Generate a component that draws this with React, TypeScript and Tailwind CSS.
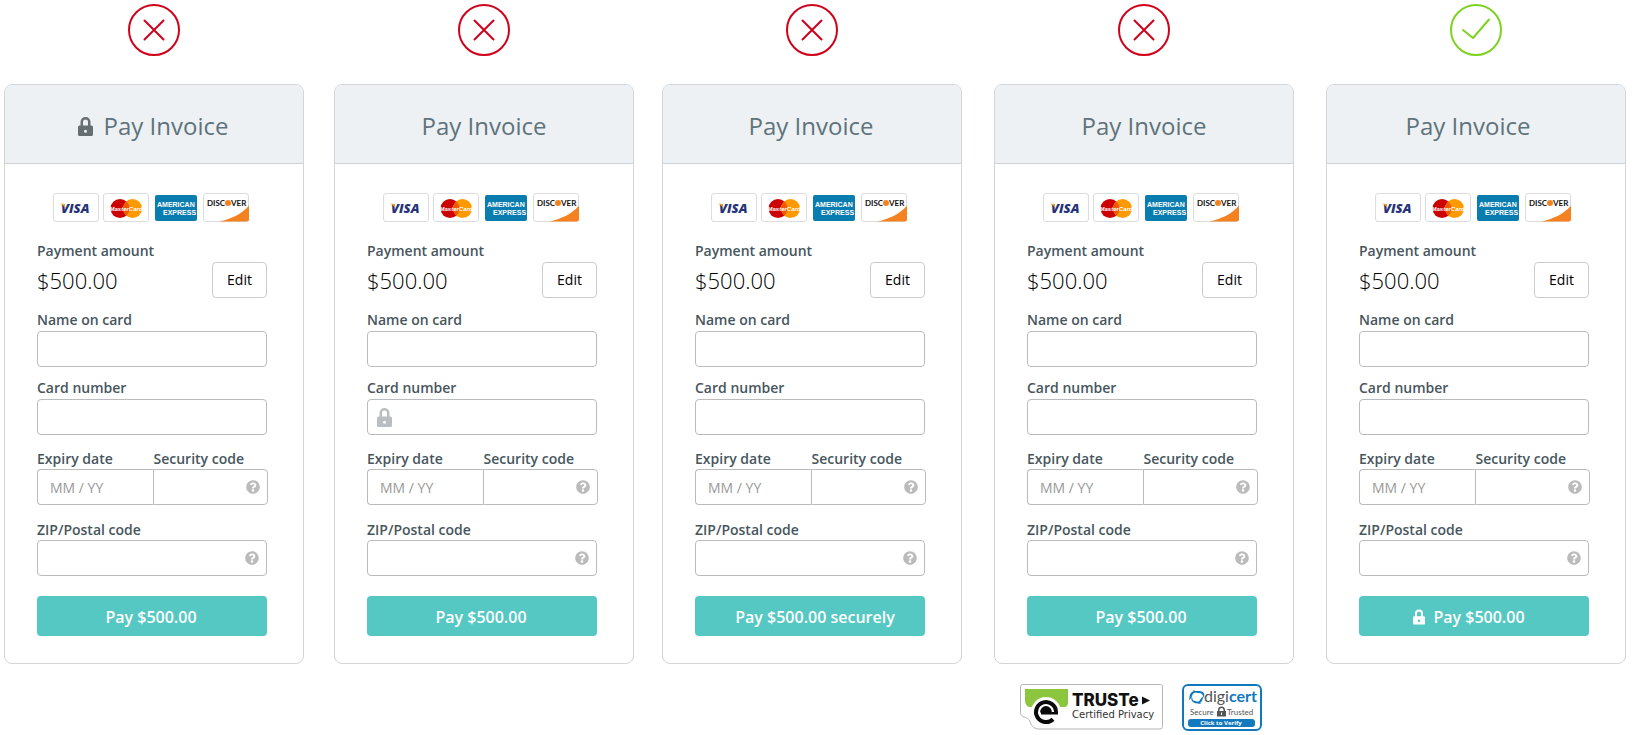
import { ReactNode, useId } from "react";
import { FaQuestionCircle } from "react-icons/fa";

type LockPlace = "title" | "cardNumber" | "button" | "none";

interface IVariant {
  id: string;
  good: boolean;
  lock: LockPlace;
  payLabel: string;
  spacing: string;
  titleClass: string;
  payClass: string;
  seals?: boolean;
}

const variants: IVariant[] = [
  {
    id: "lock-title",
    good: false,
    lock: "title",
    payLabel: "Pay $500.00",
    spacing: "",
    titleClass: "pr-0.5",
    payClass: "pr-0.5",
  },
  {
    id: "lock-field",
    good: false,
    lock: "cardNumber",
    payLabel: "Pay $500.00",
    spacing: "ml-[30px]",
    titleClass: "",
    payClass: "pr-0.5",
  },
  {
    id: "securely",
    good: false,
    lock: "none",
    payLabel: "Pay $500.00 securely",
    spacing: "ml-7",
    titleClass: "pr-0.5",
    payClass: "pl-2.5",
  },
  {
    id: "seals",
    good: false,
    lock: "none",
    payLabel: "Pay $500.00",
    spacing: "ml-8",
    titleClass: "",
    payClass: "pr-0.5",
    seals: true,
  },
  {
    id: "lock-button",
    good: true,
    lock: "button",
    payLabel: "Pay $500.00",
    spacing: "ml-8",
    titleClass: "pr-4",
    payClass: "pr-2.5",
  },
];

const LockIcon = ({ className }: { className: string }) => (
  <svg viewBox="0 0 15 19" className={className} aria-hidden="true">
    <path
      fill="currentColor"
      fillRule="evenodd"
      d="M2.500 8.500V5a5 5 0 0 1 10 0v3.500h1A1.500 1.500 0 0 1 15 10v7.500a1.500 1.500 0 0 1-1.500 1.500h-12A1.500 1.500 0 0 1 0 17.500V10a1.500 1.500 0 0 1 1.500-1.500zM5 8.500h5V5a2.500 2.500 0 0 0-5 0zM7.500 12.700a1.500 1.500 0 1 0 0 3 1.500 1.500 0 0 0 0-3z"
    />
  </svg>
);

const StatusIcon = ({ good }: { good: boolean }) => (
  <svg
    viewBox="0 0 52 52"
    className={"size-13 mx-auto " + (good ? "text-[#7ed321]" : "text-[#d0021b]")}
    fill="none"
    stroke="currentColor"
    strokeWidth="2"
    strokeLinecap="round"
    strokeLinejoin="round"
    role="img"
    aria-label={good ? "Recommended" : "Not recommended"}
  >
    <circle cx="26" cy="26" r="25" />
    {good ? (
      <path d="M13 26l10 8 16-18.500" />
    ) : (
      <path d="M16.500 16.500l19 19M35.500 16.500l-19 19" />
    )}
  </svg>
);

const CardLogos = () => (
  <div className="flex gap-1 ml-4">
    <svg width="46" height="29" viewBox="0 0 46 29" role="img" aria-label="Visa">
      <rect x="0.5" y="0.5" width="45" height="28" rx="2.500" fill="#fff" stroke="#dcdcdc" />
      <text x="8" y="20" fontSize="13" fontWeight="800" fontStyle="italic" fill="#26337a" fontFamily="Open Sans, sans-serif">
        VISA
      </text>
      <path d="M7 10.700h4.200l1.800 5.500c-1-2.500-3-4.500-6-5.500z" fill="#f7a823" />
    </svg>
    <svg width="46" height="29" viewBox="0 0 46 29" role="img" aria-label="MasterCard">
      <rect x="0.5" y="0.5" width="45" height="28" rx="2.500" fill="#fff" stroke="#dcdcdc" />
      <circle cx="17" cy="15.500" r="9.500" fill="#c00" />
      <circle cx="29.500" cy="15.500" r="9.500" fill="#f90" />
      <path d="M23.250 8.400a9.500 9.500 0 0 1 0 14.200 9.500 9.500 0 0 1 0-14.200z" fill="#ee5a00" />
      <text x="23" y="18" textAnchor="middle" fontSize="6" fontWeight="700" fontStyle="italic" fill="#fff" fontFamily="Liberation Sans, sans-serif">
        MasterCard
      </text>
    </svg>
    <svg width="46" height="29" viewBox="0 0 46 29" role="img" aria-label="American Express">
      <rect x="2" y="2" width="42" height="26" rx="2" fill="#0a7db0" />
      <g fill="#fff" fontWeight="700" fontSize="7" fontFamily="Liberation Sans, sans-serif">
        <text x="4" y="14">AMERICAN</text>
        <text x="10" y="22">EXPRESS</text>
      </g>
    </svg>
    <svg width="46" height="29" viewBox="0 0 46 29" role="img" aria-label="Discover">
      <rect x="0.5" y="0.5" width="45" height="28" rx="2.500" fill="#fff" stroke="#dcdcdc" />
      <path d="M16 28.500C29 26 40 20 46 12.500V26a2.500 2.500 0 0 1-2.500 2.500z" fill="#f58220" />
      <g fill="#111" fontWeight="700" fontSize="8" fontFamily="Lato, sans-serif">
        <text x="4" y="13">DISC</text>
        <text x="28" y="13">VER</text>
      </g>
      <circle cx="25" cy="10" r="3" fill="#f58220" />
    </svg>
  </div>
);

const TrusteSeal = () => (
  <svg width="143" height="46" viewBox="0 0 143 46" role="img" aria-label="TRUSTe Certified Privacy">
    <path
      d="M2.500.5h138a2 2 0 0 1 2 2v40a2.500 2.500 0 0 1-2.500 2.500H19c-4 0-7-2-8.500-6-1-3-2-4.500-5-5.500C2 32.500.5 31 .5 28.500v-26a2 2 0 0 1 2-2z"
      fill="#fff"
      stroke="#b5b5b5"
    />
    <path d="M5 5h43v13c0 3-1 5-4 5H9c-3-1-4-4-4-7z" fill="#8cc63f" />
    <circle cx="26" cy="28" r="15" fill="#fff" />
    <path d="M36 28a10 10 0 1 0-3 7.200" fill="none" stroke="#0a0a0a" strokeWidth="4" />
    <path d="M20 28.500a6 6.500 0 0 1 12 0z" fill="#0a0a0a" />
    <path d="M21 28h17v2.500H21z" fill="#0a0a0a" />
    <text x="52" y="22" fontSize="17" fontWeight="800" fill="#111" fontFamily="Inter, sans-serif">
      TRUSTe
    </text>
    <path d="M122 12.500l8 4-8 4z" fill="#111" />
    <text x="52" y="34" fontSize="10" fill="#333" fontFamily="DejaVu Sans, sans-serif">
      Certified Privacy
    </text>
  </svg>
);

const DigicertSeal = () => (
  <svg width="80" height="47" viewBox="0 0 80 47" role="img" aria-label="DigiCert Secure Trusted, Click to Verify">
    <rect x="1" y="1" width="78" height="45" rx="5" fill="#fff" stroke="#1279bf" strokeWidth="2" />
    <g fill="#1279bf">
      <path d="M11 6c3 2 7 0 10 2 2 2 1 4 1 6-1-3-2-5-5-5-2 0-5 0-6-3z" />
      <path d="M22 12c-2 3-1 5-4 7-2 1-4 0-6-1 3 0 5 0 6-2 1-2 2-3 4-4z" />
      <path d="M19 20c-3-1-6 0-8-2-2-1-2-4-1-6 0 3 1 5 3 5 3 1 5 1 6 3z" />
      <path d="M7 16c1-3 0-5 2-7 1-2 4-2 6-1-3 1-4 1-5 4-1 2-1 3-3 4z" />
    </g>
    <g fontSize="16" fontFamily="Lato, sans-serif">
      <text x="22" y="18" fill="#555">
        digi
        <tspan fill="#1279bf" fontWeight="700">cert</tspan>
      </text>
    </g>
    <g fontSize="8" fill="#555" fontFamily="Lato, sans-serif">
      <text x="8" y="31">Secure</text>
      <text x="45" y="31">Trusted</text>
    </g>
    <path
      d="M36 27v-1a3.500 3.500 0 0 1 7 0v1h1v5.500h-9V27zM37.500 27h4v-1a2 2 0 0 0-4 0zM39 28.500v2.500h1v-2.500z"
      fill="#555"
      fillRule="evenodd"
    />
    <rect x="6" y="35" width="67" height="8" rx="3" fill="#1279bf" />
    <text x="39" y="41" textAnchor="middle" fontSize="6" fontWeight="700" fill="#fff" fontFamily="Open Sans, sans-serif">
      Click to Verify
    </text>
  </svg>
);

const Field = ({
  id,
  label,
  placeholder,
  className = "",
  labelClass = "leading-[22px]",
  inputClass = "rounded-sm",
  icon,
  help = false,
}: {
  id: string;
  label: string;
  placeholder?: string;
  className?: string;
  labelClass?: string;
  inputClass?: string;
  icon?: ReactNode;
  help?: boolean;
}) => (
  <div className={className}>
    <label
      htmlFor={id}
      className={"block text-sm font-semibold text-[#47565d] whitespace-nowrap " + labelClass}
    >
      {label}
    </label>
    <div className="relative">
      {icon}
      <input
        id={id}
        type="text"
        placeholder={placeholder}
        className={
          "block w-full h-9 border border-[#bbbbbb] bg-white px-3 text-sm placeholder:text-[#999999] outline-none focus:border-[#55c8c3] " +
          inputClass
        }
      />
      {help && (
        <button
          type="button"
          aria-label={"Help: " + label}
          className="absolute right-2 top-[11px] text-[#bbbbbb]"
        >
          <FaQuestionCircle className="size-3.5" />
        </button>
      )}
    </div>
  </div>
);

const PaymentCard = ({ variant }: { variant: IVariant }) => {
  const id = useId();

  return (
    <form
      className="rounded-lg border border-[#d3d5d6] bg-white"
      onSubmit={(e) => e.preventDefault()}
    >
      <h2
        className={
          "flex items-center justify-center gap-[11px] h-[79px] pt-1 rounded-t-[7px] border-b border-[#cfd2d4] bg-[#edf1f4] text-2xl font-normal text-[#5f737c] " +
          variant.titleClass
        }
      >
        {variant.lock === "title" && (
          <LockIcon className="w-[15px] h-[19px] text-[#666e72]" />
        )}
        Pay Invoice
      </h2>

      <div className="pl-8 pr-9 pt-[29px] pb-[27px]">
        <CardLogos />

        <div className="mt-[18px] text-sm leading-[22px] font-semibold text-[#47565d]">
          Payment amount
        </div>
        <div className="flex items-center justify-between">
          <span className="text-[22px] font-light text-black">$500.00</span>
          <button
            type="button"
            className="w-[55px] h-9 rounded-sm border border-[#cccccc] bg-white text-sm text-black"
          >
            Edit
          </button>
        </div>

        <Field id={id + "name"} label="Name on card" className="mt-[11px]" />
        <Field
          id={id + "number"}
          label="Card number"
          className="mt-2.5"
          inputClass={variant.lock === "cardNumber" ? "rounded-sm pl-8" : "rounded-sm"}
          icon={
            variant.lock === "cardNumber" && (
              <LockIcon className="absolute left-2.5 top-[9px] w-[15px] h-[19px] text-[#b8bec1]" />
            )
          }
        />

        <div className="mt-3 -mr-px flex">
          <Field
            id={id + "expiry"}
            label="Expiry date"
            placeholder="MM / YY"
            className="flex-1 min-w-0"
            labelClass="leading-5 pt-0.5"
            inputClass="rounded-l-sm border-r-0"
          />
          <Field
            id={id + "cvc"}
            label="Security code"
            className="flex-1 min-w-0"
            labelClass="leading-5 pt-0.5 pl-px"
            inputClass="rounded-r-sm"
            help
          />
        </div>

        <Field
          id={id + "zip"}
          label="ZIP/Postal code"
          className="mt-[13px]"
          labelClass="leading-5 pt-0.5"
          help
        />

        <button
          type="submit"
          className={
            "mt-5 pt-0.5 flex items-center justify-center gap-2 w-full h-10 rounded-sm bg-[#55c8c3] text-base font-semibold text-white " +
            variant.payClass
          }
        >
          {variant.lock === "button" && <LockIcon className="w-3 h-4" />}
          {variant.payLabel}
        </button>
      </div>
    </form>
  );
};

const App = () => {
  return (
    <main className="flex items-start pl-1 pr-[9px] pt-1 bg-white font-['Open_Sans','Noto_Sans',sans-serif]">
      {variants.map((variant) => (
        <section key={variant.id} className={"flex-1 min-w-0 " + variant.spacing}>
          <div className="mb-7">
            <StatusIcon good={variant.good} />
          </div>
          <PaymentCard variant={variant} />
          {variant.seals && (
            <div className="mt-5 ml-[26px] flex gap-[19px]">
              <TrusteSeal />
              <DigicertSeal />
            </div>
          )}
        </section>
      ))}
    </main>
  );
};

export default App;
